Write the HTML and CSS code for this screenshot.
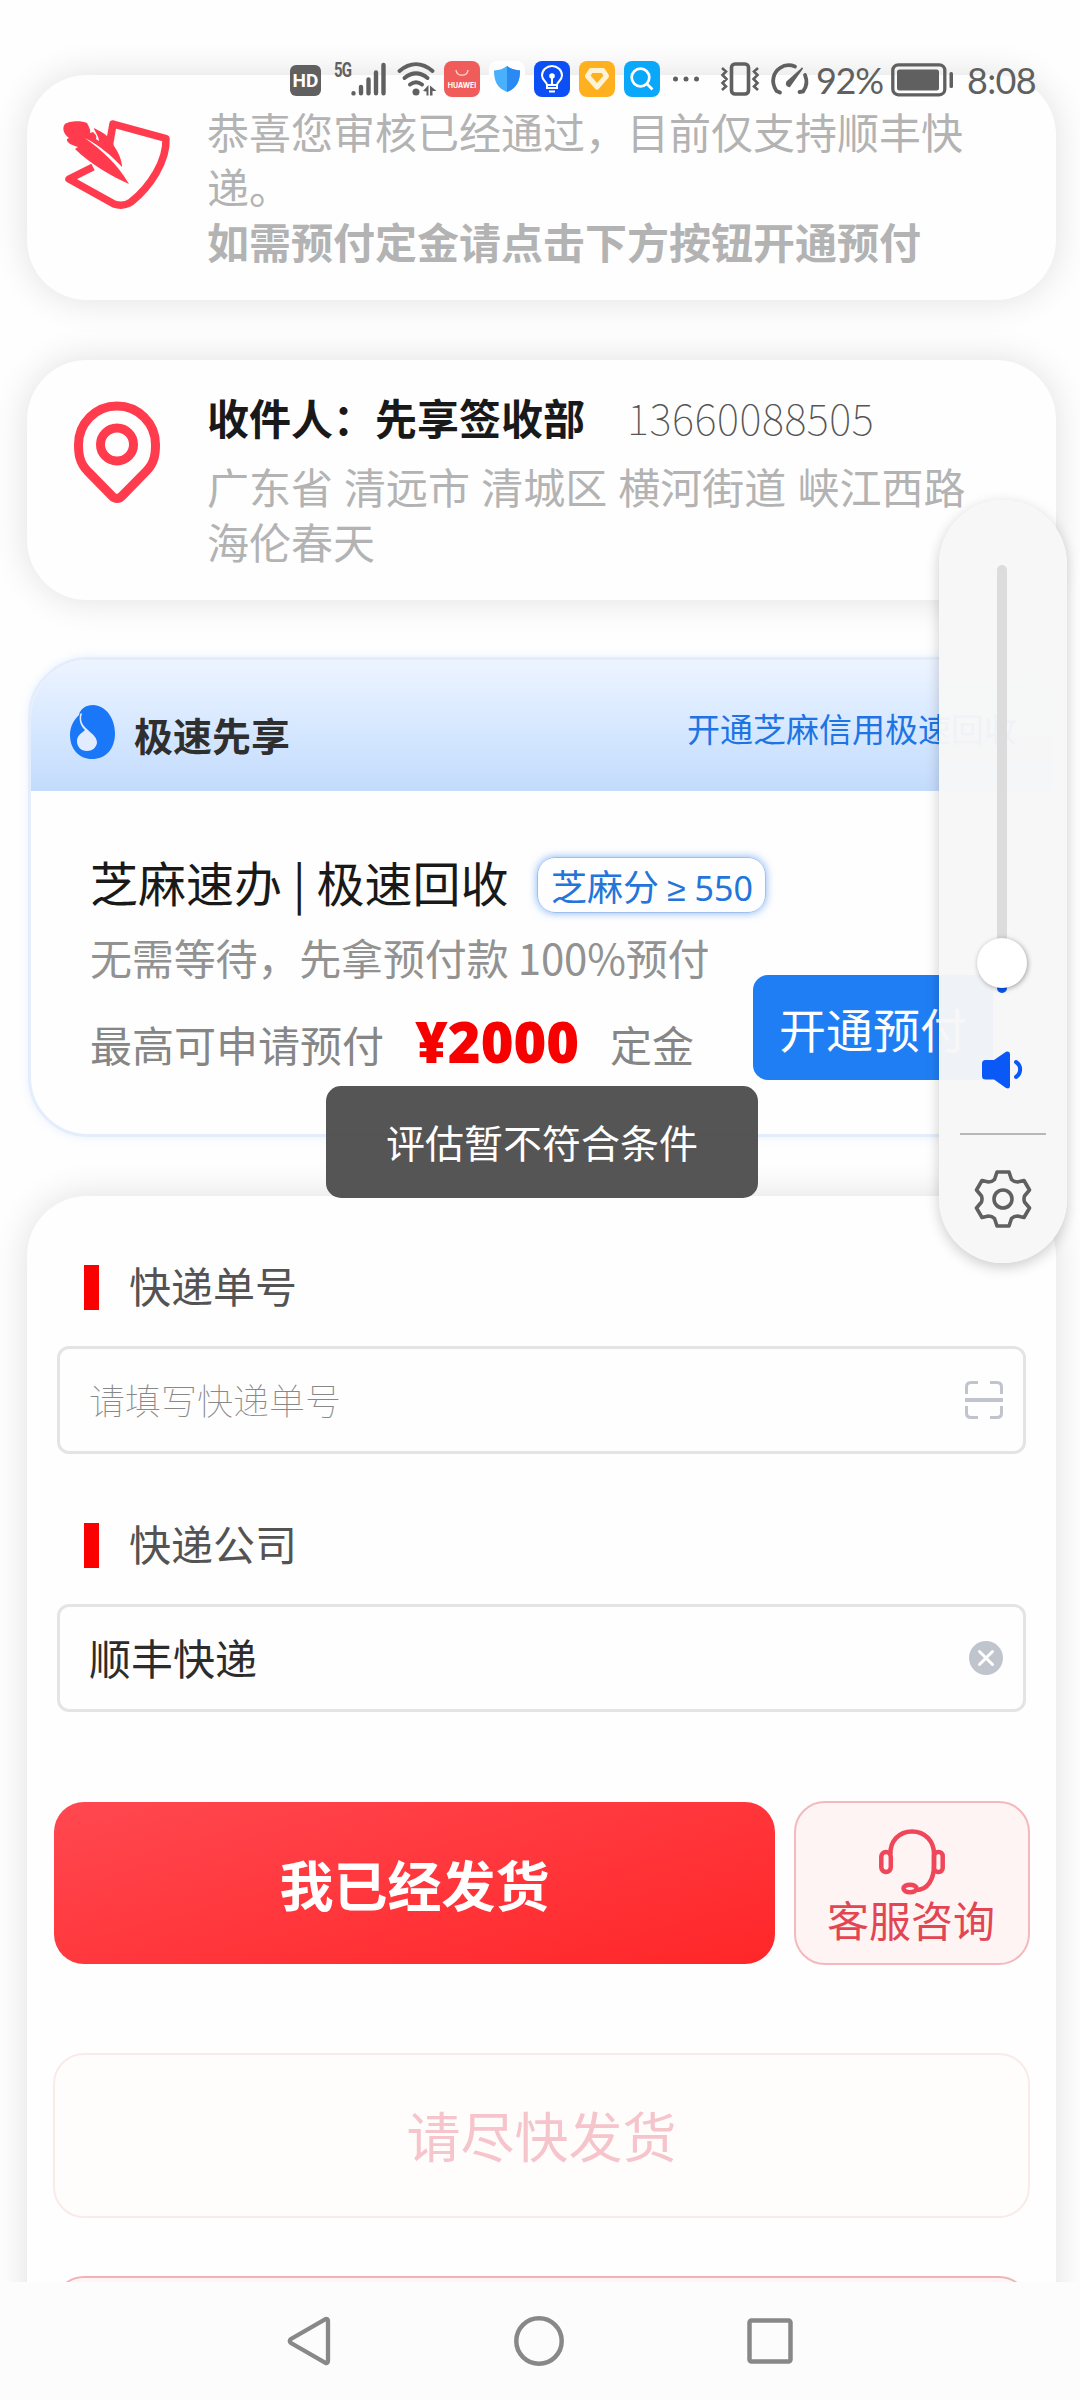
FILE: index.html
```html
<!DOCTYPE html>
<html lang="zh-CN">
<head>
<meta charset="utf-8">
<title>邮寄信息</title>
<link rel="stylesheet" href="styles.css">
</head>
<body>
<div class="phone">
  <main class="screen">
    <section class="card notice">
      <svg class="notice-icon" width="110" height="92" viewBox="0 0 110 92">
        <path d="M47 28L51 5L104 19.500C105 42 88 68 69 83C63 87 58 87 52 85L7 60L31 48" fill="none" stroke="#ff3b4d" stroke-width="7.500" stroke-linejoin="round"/>
        <path d="M67 65C51 58 28 45 13 30L16 28C9 26 4 23 5 20L7 19C1 15 0 8 3 5C6 2 19 1 25 4C27 8 29 11 28 14L31 13C34 16 35 17 34 20L37 22C37 17 32 12 32 9C42 14 50 19 52 27C57 34 60 42 60 48C50 37 38 27 23 19C42 33 55 45 67 65Z" fill="#ff3b4d"/>
      </svg>
      <div class="notice-text">
        <p>恭喜您审核已经通过，目前仅支持顺丰快递。</p>
        <p class="strong">如需预付定金请点击下方按钮开通预付</p>
      </div>
    </section>

    <section class="card address">
      <svg class="pin-icon" width="90" height="106" viewBox="0 0 90 106">
        <path d="M14.500 70C6 61 5.500 52 5.500 43.500A38.500 38.500 0 0 1 82.500 43.500C82.500 52 82 61 73.500 70L49 95Q44 100 39 95Z" fill="none" stroke="#ff3b4d" stroke-width="9"/>
        <circle cx="44" cy="43.500" r="16.500" fill="none" stroke="#ff3b4d" stroke-width="9"/>
      </svg>
      <div class="address-text">
        <div class="person"><b>收件人：先享签收部</b><span class="tel">13660088505</span></div>
        <p>广东省 清远市 清城区 横河街道 峡江西路海伦春天</p>
      </div>
    </section>

    <section class="fast">
      <header class="fast-head">
        <svg width="46" height="54" viewBox="0 0 46 54">
          <path d="M23 0C36 0 45 14 45 28C45 44 36 54 22 54C9 54 0 44 0 30C0 22 3 16 9 10C10 4 16 0 23 0Z" fill="#1a78f8"/>
          <path d="M12 8C9 18 14 21 20 27C25 31 27 34 27 38C26 43 22 46 17 46C11 46 7 42 7 36C7 30 12 28 15 25C10 20 9 16 10 9Z" fill="#e1edff"/>
        </svg>
        <b>极速先享</b>
        <span class="fast-link">开通芝麻信用极速回收</span>
      </header>
      <div class="fast-body">
        <div class="offer">
          <h2>芝麻速办 | 极速回收</h2>
          <span class="badge">芝麻分 <span class="score">≥ 550</span></span>
        </div>
        <p class="hint">无需等待，先拿预付款 100%预付</p>
        <div class="quota">
          <span>最高可申请预付</span><strong>¥2000</strong><span>定金</span>
          <button class="open-btn">开通预付</button>
        </div>
      </div>
    </section>

    <section class="card form">
      <div class="label">快递单号</div>
      <div class="field">
        <span class="placeholder">请填写快递单号</span>
        <svg width="38" height="38" viewBox="0 0 38 38" fill="none" stroke="#c0c4cc" stroke-width="3">
          <path d="M1.500 13V6Q1.500 1.500 6 1.500H13M25 1.500H32Q36.500 1.500 36.500 6V13M1.500 25V32Q1.500 36.500 6 36.500H13M25 36.500H32Q36.500 36.500 36.500 32V25"/>
          <path d="M0 19H38" stroke-width="4"/>
        </svg>
      </div>
      <div class="label">快递公司</div>
      <div class="field">
        <span class="value">顺丰快递</span>
        <svg width="34" height="34" viewBox="0 0 34 34"><circle cx="17" cy="17" r="17" fill="#c0c4cc"/><path d="M10.500 10.500L23.500 23.500M23.500 10.500L10.500 23.500" stroke="#fff" stroke-width="3" stroke-linecap="round"/></svg>
      </div>
      <div class="actions">
        <button class="sent-btn">我已经发货</button>
        <button class="service-btn">
          <svg width="66" height="66" viewBox="0 0 66 66" fill="none" stroke="#ef4759" stroke-width="4.500">
            <path d="M11.500 25C11 12 20 2.500 33 2.500S55 12 55 25V36C55 50 49 61 37 61"/>
            <rect x="2.300" y="23" width="9.500" height="20" rx="4.700"/>
            <rect x="55" y="23" width="8.700" height="20" rx="4"/>
            <ellipse cx="31" cy="59.500" rx="6.500" ry="3.800"/>
          </svg>
          <span>客服咨询</span>
        </button>
      </div>
      <div class="wide-btn faded">请尽快发货</div>
      <div class="wide-btn"></div>
    </section>
  </main>

  <nav class="nav">
    <svg width="44" height="50" viewBox="0 0 44 50"><path d="M38 3.300Q41 2 41 5V45Q41 48 38 46.700L4 27Q1.500 25 4 23Z" fill="none" stroke="#888" stroke-width="4.300"/></svg>
    <svg width="50" height="50" viewBox="0 0 50 50"><circle cx="25" cy="25" r="22.700" fill="none" stroke="#888" stroke-width="4.500"/></svg>
    <svg width="46" height="46" viewBox="0 0 46 46"><rect x="2.500" y="2.500" width="41" height="41" rx="2" fill="none" stroke="#888" stroke-width="4.500"/></svg>
  </nav>

  <div class="status">
    <span class="hd">HD</span>
    <span class="net">5G</span>
    <svg class="signal" width="36" height="34" viewBox="0 0 36 34" stroke="#606060" stroke-width="4.400" stroke-linecap="round"><path d="M2.500 31.300V31.400M10 25V31.300M17.500 17.500V31.300M25 10.500V31.300M32.500 3V31.300"/></svg>
    <svg class="wifi" width="40" height="34" viewBox="0 0 40 34" fill="none" stroke="#606060" stroke-width="4" stroke-linecap="round">
      <path d="M2.500 9C13 0 25 0 35.500 9M7.500 16C15 10 23 10 30.500 16M13 22.500C17 19.500 21 19.500 25 22.500"/>
      <circle cx="19" cy="30" r="3.500" fill="#606060" stroke="none"/>
      <path d="M26 29L31.500 23V33.500H29.500V29.500ZM33 23.500L39.500 29H35.500V33.500H33Z" fill="#606060" stroke="none"/>
    </svg>
    <span class="app huawei"><svg width="14" height="8" viewBox="0 0 14 8"><path d="M1 1C2 8 12 8 13 1" fill="none" stroke="#ffc9c5" stroke-width="1.500"/></svg>HUAWEI</span>
    <span class="app shield"><svg width="26" height="26" viewBox="0 0 26 26"><path d="M13 0Q18 4 26 4.500C26 15 23 22 13 26C3 22 0 15 0 4.500Q8 4 13 0Z" fill="#49b1fb"/><path d="M13 0Q18 4 26 4.500C26 15 23 22 13 26Z" fill="#2a89f2"/></svg></span>
    <span class="app bulb"><svg width="24" height="28" viewBox="0 0 24 28" fill="none" stroke="#fff" stroke-width="2"><path d="M7 20C7 17 2 15 2 10.500A10 9.500 0 0 1 22 10.500C22 15 17 17 17 20ZM7 20V23H17V20M9 26.500H15M12 11V20"/><circle cx="12" cy="11" r="1.800" fill="#fff"/></svg></span>
    <span class="app gem"><svg width="24" height="22" viewBox="0 0 24 22"><path d="M6 2.500H18L21.500 8L12 19L2.500 8Z" fill="none" stroke="#fff3d6" stroke-width="5" stroke-linejoin="round"/></svg></span>
    <span class="app search"><svg width="24" height="24" viewBox="0 0 24 24" fill="none" stroke="#fff" stroke-width="2.700"><circle cx="10.500" cy="10.500" r="8.800"/><path d="M16.500 16.500L22.500 22.500"/></svg></span>
    <svg class="dots" width="26" height="6" viewBox="0 0 26 6" fill="#606060"><circle cx="2.500" cy="3" r="2.500"/><circle cx="13" cy="3" r="2.500"/><circle cx="23.500" cy="3" r="2.500"/></svg>
    <svg class="vibrate" width="40" height="34" viewBox="0 0 40 34" fill="none" stroke="#606060" stroke-width="3"><rect x="11.500" y="2" width="17" height="30" rx="3.500" stroke-width="3.600"/><path d="M2 6L6 9.500L2.500 13L6.500 17L2.500 21L6 24.500L2 28M38 6L34 9.500L37.500 13L33.500 17L37.500 21L34 24.500L38 28" stroke-width="2.600"/></svg>
    <svg class="gauge" width="38" height="32" viewBox="0 0 38 32" fill="none" stroke="#606060" stroke-width="4" stroke-linecap="round"><path d="M9 29.500L5.500 28C-1 18 3 9 9 5C14 1.500 19 1.500 24 3.500M34 12C36.500 18 35.500 24 32 28.500L28.500 29" stroke-width="3.800"/><path d="M31.500 5L18.500 23.500Q14.500 22.500 16 19Z" fill="#606060" stroke-width="1.500"/></svg>
    <span class="percent">92%</span>
    <svg class="battery" width="62" height="34" viewBox="0 0 62 34"><rect x="1.800" y="1.800" width="52" height="30" rx="5.500" fill="none" stroke="#606060" stroke-width="3.300"/><rect x="6" y="6.500" width="42" height="21" rx="2.500" fill="#606060"/><rect x="58.500" y="9" width="3.500" height="16" rx="1.500" fill="#606060"/></svg>
    <span class="time">8:08</span>
  </div>

  <div class="toast">评估暂不符合条件</div>

  <aside class="volume">
    <div class="track"><i class="level"></i><i class="knob"></i></div>
    <svg class="speaker" width="42" height="38" viewBox="0 0 42 38"><path d="M3.500 9H12L24 .8Q28 -.5 28 3V35Q28 38.500 24 37L12 28.500H3.500Q0 28.500 0 25V12.500Q0 9 3.500 9Z" fill="#0a59f7"/><path d="M34 11C39.500 14.500 39.500 22.500 34 26" fill="none" stroke="#0a59f7" stroke-width="4" stroke-linecap="round"/></svg>
    <hr>
    <svg class="gear" width="58" height="60" viewBox="0 0 58 60" fill="none" stroke="#606060" stroke-width="3.600" stroke-linejoin="round"><path d="M23 3H35L37.500 10.500Q40 13 43.500 13L50 11.500L55.500 21L50.500 27Q49.500 30 50.500 33L55.500 39L50 48.500L43.500 47Q40 47 37.500 49.500L35 57H23L20.500 49.500Q18 47 14.500 47L8 48.500L2.500 39L7.500 33Q8.500 30 7.500 27L2.500 21L8 11.500L14.500 13Q18 13 20.500 10.500Z"/><circle cx="29" cy="30" r="9"/></svg>
  </aside>
</div>
</body>
</html>
```
FILE: styles.css
```css
* { box-sizing: border-box; }
body, p, h2 { margin: 0; }
body {
  background: #fefefe;
  font-family: "Noto Sans CJK SC", sans-serif;
  font-size: 42px;
  line-height: 55px;
  color: #191919;
}
button { font-family: inherit; border: 0; padding: 0; }
svg { display: block; flex: none; overflow: visible; }

.phone {
  position: relative;
  width: 1080px;
  height: 2400px;
  display: flex;
  flex-direction: column;
  overflow: hidden;
}
.screen {
  height: 2282px;
  flex: none;
  overflow: hidden;
  padding: 75px 24px 0 27px;
}
.card {
  background: #fefefe;
  border-radius: 60px;
  box-shadow: 0 0 36px rgba(0, 0, 0, .12);
}

/* review notice */
.notice {
  height: 225px;
  display: flex;
  padding: 28px 60px 0 35px;
  color: #b3b3b3;
}
.notice-icon { margin-top: 16px; }
.notice-text { width: 770px; margin-left: 35px; }
.strong { font-weight: 700; }

/* recipient */
.address {
  height: 240px;
  margin-top: 60px;
  display: flex;
  padding: 29px 0 0 46px;
}
.pin-icon { margin-top: 12px; }
.address-text { width: 800px; margin-left: 44px; }
.address-text p { width: 780px; margin-top: 14px; color: #b3b3b3; word-spacing: 1.7px; }
.person { display: flex; }
.tel {
  margin-left: 42px;
  font-weight: 100;
  color: #555;
  letter-spacing: .6px;
}

/* prepay offer */
.fast {
  height: 480px;
  margin: 57px 0 0 1px;
  border: 3px solid #e4edfb;
  border-radius: 60px;
  box-shadow: 0 0 10px rgba(120, 170, 255, .18);
  overflow: hidden;
}
.fast-head {
  height: 131px;
  display: flex;
  align-items: center;
  padding: 14px 36px 0 39px;
  background: linear-gradient(#edf4ff, #d3e6ff 60%, #c3dbfc);
}
.fast-head svg { margin-top: -2px; }
.fast-head b { margin: 4px 0 0 18px; font-size: 39px; color: #2f2f2f; }
.fast-link { margin: -8px 0 0 auto; font-size: 33px; color: #1f74e4; }
.fast-body { padding: 56px 33px 0 59px; }
.offer { display: flex; align-items: center; height: 68px; }
.offer h2 { font-size: 48px; font-weight: 400; white-space: nowrap; }
.badge {
  width: 229px;
  height: 56px;
  margin: 8px 0 0 29px;
  border: 1px solid #9dc0f3;
  border-radius: 18px;
  box-shadow: 0 0 8px rgba(50, 130, 240, .6);
  font-size: 36px;
  line-height: 54px;
  text-align: center;
  color: #2475da;
  white-space: nowrap;
}
.score { font-family: "Noto Sans", sans-serif; font-size: 34px; }
.hint { margin-top: 14px; color: #929292; letter-spacing: -.15px; }
.quota { display: flex; height: 105px; align-items: flex-start; color: #868686; }
.quota span { margin-top: 32px; }
.quota strong {
  margin: 30px 31px 0 31px;
  font: 900 56px/55px "Noto Sans", "Noto Sans CJK SC", sans-serif;
  color: #f60000;
}
.open-btn {
  width: 240px;
  height: 105px;
  margin: -9px 27px 0 auto;
  border-radius: 15px;
  background: #207ef4;
  color: #fff;
  font-size: 47px;
}

/* shipping form */
.form { height: 1200px; margin-top: 59px; padding: 69px 26px 0; }
.label {
  height: 45px;
  margin: 0 0 36px 31px;
  border-left: 15px solid #fb0000;
  padding-left: 30px;
  line-height: 39px;
  color: #535353;
}
.field {
  height: 108px;
  margin: 0 4px 69px;
  border: 3px solid #e4e4e4;
  border-radius: 12px;
  padding: 0 20px 0 29px;
  display: flex;
  align-items: center;
  justify-content: space-between;
  color: #2c2c2c;
}
.value { margin-top: -4px; }
.placeholder { font-size: 36px; font-weight: 100; color: #888; margin-top: -1px; }
.actions { display: flex; height: 164px; margin-top: 89px; align-items: center; }
.sent-btn {
  width: 721px;
  height: 162px;
  margin-left: 1px;
  border-radius: 30px;
  background: linear-gradient(165deg, #ff4850, #ff2628);
  color: #fff;
  font-size: 54px;
  font-weight: 700;
}
.service-btn {
  width: 236px;
  height: 164px;
  margin-left: 19px;
  border: 2px solid #f3b9bd;
  border-radius: 31px;
  background: #fff4f4;
  display: flex;
  flex-direction: column;
  align-items: center;
  padding-top: 26px;
  font-size: 42px;
  line-height: 48px;
  color: #e24653;
}
.service-btn span { margin-right: 2px; }
.wide-btn {
  height: 165px;
  width: 977px;
  margin-top: 58px;
  border: 2px solid #efb3b7;
  border-radius: 31px;
  background: #fff4f4;
}
.wide-btn.faded {
  margin-top: 88px;
  border-color: #faeaea;
  background: #fefdfc;
  color: #f6c4cb;
  font-size: 54px;
  line-height: 160px;
  text-align: center;
}

/* system navigation */
.nav {
  position: relative;
  height: 118px;
  flex: none;
  background: #fcfcfc;
  display: flex;
  justify-content: center;
  align-items: center;
  gap: 183px;
}

/* status bar over the scrolled page */
.status {
  position: absolute;
  top: 58px;
  left: 290px;
  height: 42px;
  display: flex;
  align-items: center;
  color: #606060;
  line-height: 1;
}
.hd {
  width: 31px;
  height: 31px;
  margin-top: 3px;
  border-radius: 6px;
  background: #606060;
  color: #fff;
  font: 700 19px/31px Roboto, sans-serif;
  text-align: center;
}
.net { width: 17px; margin: -18px 0 0 13px; font: 700 20px/18px Roboto, sans-serif; letter-spacing: -1px; transform: scaleX(.75); transform-origin: left; }
.wifi { margin-left: 10px; }
.app {
  width: 36px;
  height: 36px;
  margin-right: 9px;
  border-radius: 8px;
  display: flex;
  align-items: center;
  justify-content: center;
  flex: none;
}
.huawei { margin-left: 7px; background: #f05c59; flex-direction: column; gap: 5px; font: 700 7px/7px Inter, sans-serif; color: #fff; }
.shield { background: #fff; }
.bulb { background: #0c50f5; }
.gem { background: #ffb01f; }
.search { background: #0aa8fb; }
.dots { margin-left: 4px; }
.vibrate { margin-left: 21px; }
.gauge { margin-left: 11px; }
.percent { width: 70px; margin-left: 7px; font: 400 36px/42px Lato, sans-serif; letter-spacing: -1.3px; padding-top: 2px; }
.battery { margin-left: 5px; margin-top: 2px; }
.time { margin-left: 14px; font: 400 36px/42px Lato, sans-serif; letter-spacing: -.7px; padding-top: 2px; }

.toast {
  position: absolute;
  left: 326px;
  top: 1086px;
  width: 432px;
  height: 112px;
  border-radius: 15px;
  background: rgba(76, 76, 76, .95);
  color: #fff;
  font-size: 39px;
  line-height: 111px;
  text-align: center;
}

/* volume panel */
.volume {
  position: absolute;
  left: 939px;
  top: 500px;
  width: 128px;
  height: 763px;
  border-radius: 64px;
  background: rgba(247, 247, 247, .965);
  box-shadow: 0 4px 14px rgba(0, 0, 0, .2);
  display: flex;
  flex-direction: column;
  align-items: center;
  padding-top: 65px;
}
.track {
  position: relative;
  width: 10px;
  height: 428px;
  margin-right: 2px;
  border-radius: 5px;
  background: #dcdcdc;
}
.level { position: absolute; left: 0; bottom: 0; width: 10px; height: 30px; border-radius: 5px; background: #0a59f7; }
.knob {
  position: absolute;
  left: -20px;
  top: 373px;
  width: 50px;
  height: 50px;
  border-radius: 50%;
  background: #fff;
  box-shadow: 1px 1px 5px rgba(0, 0, 0, .35);
}
.speaker { margin-top: 58px; }
.volume hr { width: 86px; height: 2px; margin: 44px 0 0; border: 0; background: #b8b8b8; }
.gear { margin: 34px 0 0; }
```
